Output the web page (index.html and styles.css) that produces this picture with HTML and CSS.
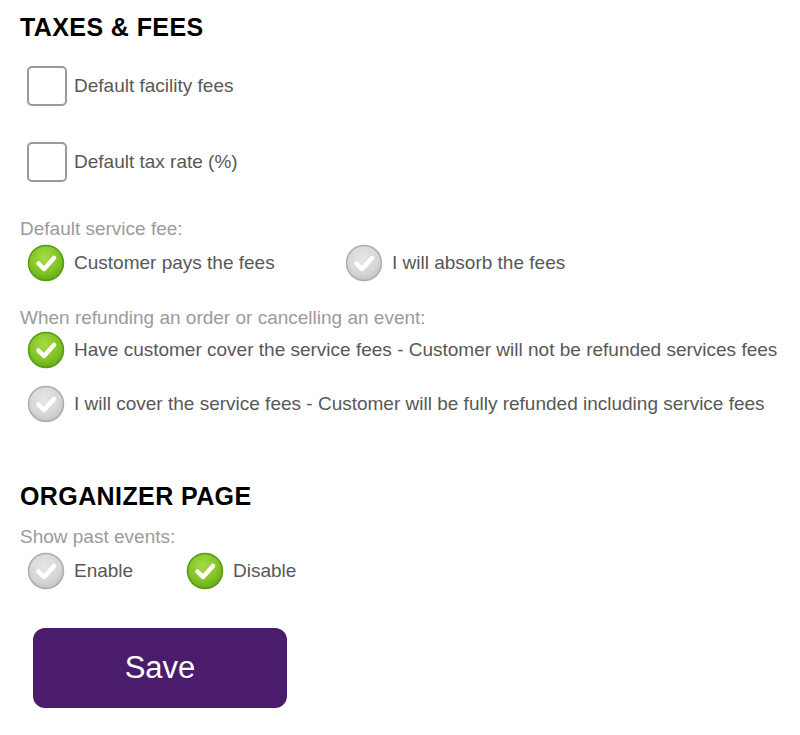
FILE: index.html
```html
<html>
    <head>
        <link rel="stylesheet" href="styles.css">
    </head>
    <body>
        <svg class="defs" width="0" height="0">
            <defs>
                <radialGradient id="green-fill" cx="45%" cy="35%" r="65%">
                    <stop offset="0%" stop-color="#a6dc45"/>
                    <stop offset="70%" stop-color="#7fc225"/>
                    <stop offset="100%" stop-color="#66a915"/>
                </radialGradient>
                <radialGradient id="grey-fill" cx="45%" cy="35%" r="65%">
                    <stop offset="0%" stop-color="#e6e6e6"/>
                    <stop offset="70%" stop-color="#d6d6d6"/>
                    <stop offset="100%" stop-color="#c4c4c4"/>
                </radialGradient>
            </defs>
        </svg>

        <div class="settings">
            <h2 class="section-title">TAXES &amp; FEES</h2>

            <div class="check-row first">
                <span class="check-box"></span>
                <span class="option-text">Default facility fees</span>
            </div>
            <div class="check-row">
                <span class="check-box"></span>
                <span class="option-text">Default tax rate (%)</span>
            </div>

            <div class="field-label service-label">Default service fee:</div>
            <div class="radio-row">
                <div class="option wide">
                    <svg class="radio" viewBox="0 0 38 38"><circle cx="19" cy="19" r="17.5" fill="url(#green-fill)" stroke="#5b9b12" stroke-width="1.5"/><path d="M11.5 19.5 L17 25 L27 14" fill="none" stroke="#fff" stroke-width="4.5" stroke-linecap="round" stroke-linejoin="round"/></svg>
                    <span class="option-text">Customer pays the fees</span>
                </div>
                <div class="option">
                    <svg class="radio" viewBox="0 0 38 38"><circle cx="19" cy="19" r="17.5" fill="url(#grey-fill)" stroke="#aeaeae" stroke-width="1.5"/><path d="M11.5 19.5 L17 25 L27 14" fill="none" stroke="#fff" stroke-width="4.5" stroke-linecap="round" stroke-linejoin="round"/></svg>
                    <span class="option-text">I will absorb the fees</span>
                </div>
            </div>

            <div class="field-label refund-label">When refunding an order or cancelling an event:</div>
            <div class="radio-row tight">
                <div class="option">
                    <svg class="radio" viewBox="0 0 38 38"><circle cx="19" cy="19" r="17.5" fill="url(#green-fill)" stroke="#5b9b12" stroke-width="1.5"/><path d="M11.5 19.5 L17 25 L27 14" fill="none" stroke="#fff" stroke-width="4.5" stroke-linecap="round" stroke-linejoin="round"/></svg>
                    <span class="option-text">Have customer cover the service fees - Customer will not be refunded services fees</span>
                </div>
            </div>
            <div class="radio-row spaced">
                <div class="option">
                    <svg class="radio" viewBox="0 0 38 38"><circle cx="19" cy="19" r="17.5" fill="url(#grey-fill)" stroke="#aeaeae" stroke-width="1.5"/><path d="M11.5 19.5 L17 25 L27 14" fill="none" stroke="#fff" stroke-width="4.5" stroke-linecap="round" stroke-linejoin="round"/></svg>
                    <span class="option-text">I will cover the service fees - Customer will be fully refunded including service fees</span>
                </div>
            </div>

            <h2 class="section-title organizer">ORGANIZER PAGE</h2>

            <div class="field-label past-label">Show past events:</div>
            <div class="radio-row past">
                <div class="option short">
                    <svg class="radio" viewBox="0 0 38 38"><circle cx="19" cy="19" r="17.5" fill="url(#grey-fill)" stroke="#aeaeae" stroke-width="1.5"/><path d="M11.5 19.5 L17 25 L27 14" fill="none" stroke="#fff" stroke-width="4.5" stroke-linecap="round" stroke-linejoin="round"/></svg>
                    <span class="option-text">Enable</span>
                </div>
                <div class="option">
                    <svg class="radio" viewBox="0 0 38 38"><circle cx="19" cy="19" r="17.5" fill="url(#green-fill)" stroke="#5b9b12" stroke-width="1.5"/><path d="M11.5 19.5 L17 25 L27 14" fill="none" stroke="#fff" stroke-width="4.5" stroke-linecap="round" stroke-linejoin="round"/></svg>
                    <span class="option-text">Disable</span>
                </div>
            </div>

            <button class="save-btn" type="button">Save</button>
        </div>
    </body>
</html>
```

FILE: styles.css
```css
body {
    margin: 0;
    background-color: white;
    font-family: "Liberation Sans", Arial, sans-serif;
}

.defs {
    position: absolute;
    width: 0;
    height: 0;
}

.settings {
    display: flex;
    flex-direction: column;
    align-items: flex-start;

    padding: 13px 0 0 20px;
}

.section-title {
    margin: 0;

    font-size: 25px;
    line-height: 28px;
    font-weight: bold;
    letter-spacing: 0.4px;
    color: black;
}

.section-title.organizer {
    margin-top: 59px;
}

.check-row {
    display: flex;
    align-items: center;
    gap: 7px;

    margin: 36px 0 0 7px;
}

.check-row.first {
    margin-top: 25px;
}

.check-box {
    width: 36px;
    height: 36px;

    border: 2px solid #9a9a9a;
    border-radius: 5px;
    background-color: white;
}

.option-text {
    font-size: 19px;
    line-height: 22px;
    color: #585858;
    white-space: nowrap;
}

.field-label {
    font-size: 19px;
    line-height: 22px;
    color: #9b9b9b;
}

.service-label {
    margin-top: 36px;
}

.refund-label {
    margin-top: 25px;
}

.past-label {
    margin-top: 16px;
}

.radio-row {
    display: flex;
    align-items: center;

    margin: 4px 0 0 7px;
}

.radio-row.tight {
    margin-top: 2px;
}

.radio-row.spaced {
    margin-top: 16px;
}

.radio-row.past {
    margin-top: 4px;
}

.option {
    display: flex;
    align-items: center;
    gap: 9px;
}

.option.wide {
    width: 318px;
}

.option.short {
    width: 159px;
}

.radio {
    width: 38px;
    height: 38px;
    flex-shrink: 0;
}

.save-btn {
    width: 254px;
    height: 80px;

    margin: 38px 0 0 13px;
    padding: 0;

    border: none;
    outline: none;
    border-radius: 12px;

    font-family: "Liberation Sans", Arial, sans-serif;
    font-size: 31px;
    color: white;
    background-color: #4b1c6b;
}

.save-btn:hover {
    cursor: pointer;
}
```
